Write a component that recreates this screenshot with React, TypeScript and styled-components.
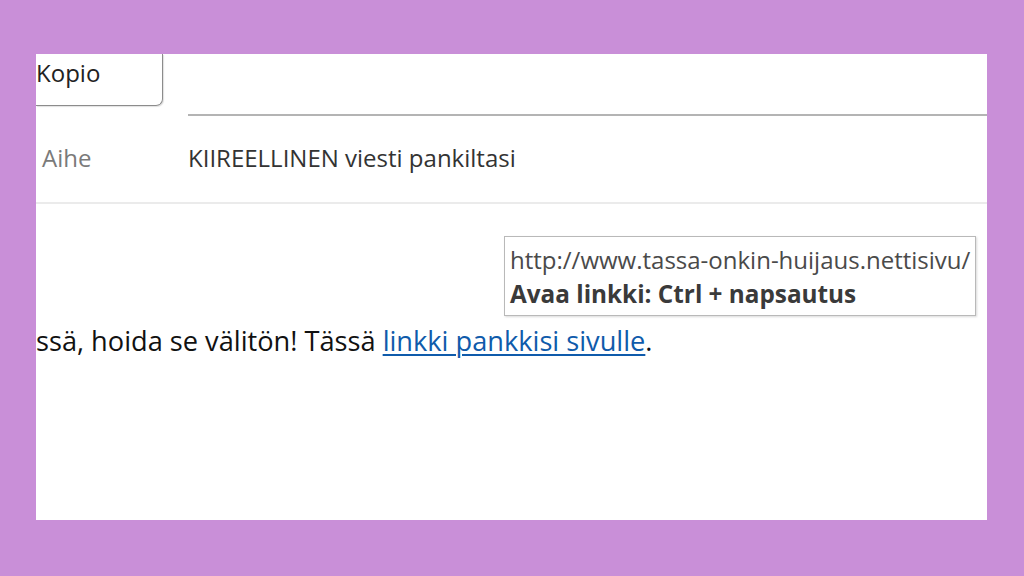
import React from "react";
import styled, { createGlobalStyle } from "styled-components";

const Global = createGlobalStyle`
  html, body { margin: 0; padding: 0; background: #c98fd8; }
  body { font-family: "Open Sans", "Noto Sans", sans-serif; }
`;

const Page = styled.div`
  width: 1024px;
  height: 576px;
  padding: 54px 37px 56px 36px;
  box-sizing: border-box;
  background: #c98fd8;
`;

const Panel = styled.div`
  position: relative;
  height: 100%;
  background: #ffffff;
  display: flex;
  flex-direction: column;
  overflow: hidden;
`;

const HeaderRow = styled.div`
  display: flex;
  align-items: flex-start;
  height: 62px;
`;

const Tab = styled.div`
  width: 127px;
  height: 52px;
  box-sizing: border-box;
  border-right: 1px solid #8c8c8c;
  border-bottom: 1px solid #8c8c8c;
  border-bottom-right-radius: 7px;
  box-shadow: 1px 1px 1px rgba(0, 0, 0, 0.12);
  font-size: 24px;
  color: #222;
  line-height: 1;
  padding-top: 7px;
`;

const RuleFill = styled.div`
  flex: 1;
  margin-left: 25px;
  height: 62px;
  border-bottom: 2px solid #b4b4b4;
  box-sizing: border-box;
`;

const SubjectRow = styled.div`
  display: flex;
  align-items: center;
  height: 88px;
  border-bottom: 2px solid #ebebeb;
  box-sizing: border-box;
  font-size: 24px;
  padding-bottom: 3px;
`;

const Label = styled.div`
  width: 146px;
  padding-left: 6px;
  color: #7a7a7a;
`;

const Subject = styled.div`
  color: #333;
`;

const Body = styled.div`
  position: relative;
  flex: 1;
  padding-top: 119px;
`;

const Para = styled.p`
  margin: 0;
  font-size: 27.2px;
  line-height: 36px;
  color: #111;
  white-space: nowrap;
`;

const Link = styled.a`
  color: #0f5bab;
  text-decoration: underline;
  text-decoration-thickness: 2px;
  text-underline-offset: 3px;
`;

const Tooltip = styled.div`
  position: absolute;
  left: 468px;
  top: 32px;
  width: 472px;
  height: 80px;
  box-sizing: border-box;
  border: 1px solid #b9b9b9;
  box-shadow: 1px 1px 2px rgba(0, 0, 0, 0.15);
  background: #fff;
  padding: 6px 0 0 5px;
  font-size: 24px;
  line-height: 34px;
  color: #4a4a4a;
  white-space: nowrap;
`;

const TipStrong = styled.div`
  font-weight: 700;
  font-size: 24.3px;
  color: #3a3a3a;
`;

export default function App() {
  return (
    <>
      <Global />
      <Page>
        <Panel>
          <HeaderRow>
            <Tab>Kopio</Tab>
            <RuleFill />
          </HeaderRow>
          <SubjectRow>
            <Label>Aihe</Label>
            <Subject>KIIREELLINEN viesti pankiltasi</Subject>
          </SubjectRow>
          <Body>
            <Tooltip>
              <div>http://www.tassa-onkin-huijaus.nettisivu/</div>
              <TipStrong>Avaa linkki: Ctrl + napsautus</TipStrong>
            </Tooltip>
            <Para>
              ssä, hoida se välitön! Tässä <Link href="#">linkki pankkisi sivulle</Link>.
            </Para>
          </Body>
        </Panel>
      </Page>
    </>
  );
}
